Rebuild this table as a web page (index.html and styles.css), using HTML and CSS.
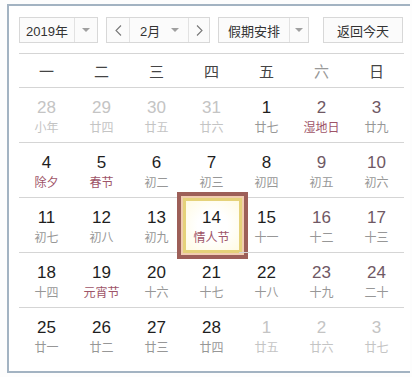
FILE: index.html
```html
<!DOCTYPE html>
<html lang="zh-CN">
<head>
<meta charset="utf-8">
<link rel="stylesheet" href="styles.css">
</head>
<body>
<div class="frame">
  <div class="toolbar">
    <div class="ctl sel year">
      <span class="label">2019年</span>
      <span class="drop"><i class="tri"></i></span>
    </div>
    <div class="ctl month">
      <span class="nav"><svg width="7" height="11" viewBox="0 0 7 11"><polyline points="6,0.5 1,5.5 6,10.5" fill="none" stroke="#777" stroke-width="1.1"/></svg></span>
      <span class="mlabel"><span>2月</span><i class="tri"></i></span>
      <span class="nav navr"><svg width="7" height="11" viewBox="0 0 7 11"><polyline points="1,0.5 6,5.5 1,10.5" fill="none" stroke="#777" stroke-width="1.1"/></svg></span>
    </div>
    <div class="ctl sel holiday">
      <span class="label">假期安排</span>
      <span class="drop"><i class="tri"></i></span>
    </div>
    <div class="ctl today">返回今天</div>
  </div>
  <div class="cal">
    <div class="wk">一</div><div class="wk">二</div><div class="wk">三</div><div class="wk">四</div><div class="wk">五</div><div class="wk light">六</div><div class="wk">日</div>

    <div class="d other"><b>28</b><span>小年</span></div>
    <div class="d other"><b>29</b><span>廿四</span></div>
    <div class="d other"><b>30</b><span>廿五</span></div>
    <div class="d other"><b>31</b><span>廿六</span></div>
    <div class="d"><b>1</b><span>廿七</span></div>
    <div class="d we"><b>2</b><span class="fest">湿地日</span></div>
    <div class="d we"><b>3</b><span>廿九</span></div>

    <div class="d"><b>4</b><span class="fest">除夕</span></div>
    <div class="d"><b>5</b><span class="fest">春节</span></div>
    <div class="d"><b>6</b><span>初二</span></div>
    <div class="d"><b>7</b><span>初三</span></div>
    <div class="d"><b>8</b><span>初四</span></div>
    <div class="d we"><b>9</b><span>初五</span></div>
    <div class="d we"><b>10</b><span>初六</span></div>

    <div class="d"><b>11</b><span>初七</span></div>
    <div class="d"><b>12</b><span>初八</span></div>
    <div class="d"><b>13</b><span>初九</span></div>
    <div class="d sel-day"><i class="mark"><i class="inner"></i></i><b>14</b><span class="fest">情人节</span></div>
    <div class="d"><b>15</b><span>十一</span></div>
    <div class="d we"><b>16</b><span>十二</span></div>
    <div class="d we"><b>17</b><span>十三</span></div>

    <div class="d"><b>18</b><span>十四</span></div>
    <div class="d"><b>19</b><span class="fest">元宵节</span></div>
    <div class="d"><b>20</b><span>十六</span></div>
    <div class="d"><b>21</b><span>十七</span></div>
    <div class="d"><b>22</b><span>十八</span></div>
    <div class="d we"><b>23</b><span>十九</span></div>
    <div class="d we"><b>24</b><span>二十</span></div>

    <div class="d last"><b>25</b><span>廿一</span></div>
    <div class="d last"><b>26</b><span>廿二</span></div>
    <div class="d last"><b>27</b><span>廿三</span></div>
    <div class="d last"><b>28</b><span>廿四</span></div>
    <div class="d last other"><b>1</b><span>廿五</span></div>
    <div class="d last other"><b>2</b><span>廿六</span></div>
    <div class="d last other"><b>3</b><span>廿七</span></div>
  </div>
</div>
</body>
</html>
```
FILE: styles.css
```css
html, body {
  margin: 0;
  padding: 0;
  background: #fdfdfd;
  overflow: hidden;
}
body {
  font-family: "Liberation Sans", "Noto Sans CJK SC", sans-serif;
  color: #222;
}
.frame {
  margin: 4px 0 0 7px;
  border: 2px solid #a3b3c2;
  border-right: 0;
  padding: 11px 0 9px 10px;
  width: 403px;
  box-sizing: border-box;
  background: #fff;
}
.toolbar {
  display: flex;
  align-items: stretch;
  height: 26px;
  font-size: 13px;
  color: #333;
  font-family: "Liberation Sans", "Noto Sans CJK SC", sans-serif;
}
.ctl {
  display: flex;
  align-items: stretch;
  border: 1px solid #d8d8d8;
  background: #fbfbfb;
  box-sizing: border-box;
}
.sel .label {
  display: flex;
  align-items: center;
  justify-content: center;
}
.year { width: 79px; }
.year .label { width: 54px; border-right: 1px solid #e2e2e2; }
.sel .drop {
  flex: 1;
  display: flex;
  align-items: center;
  justify-content: center;
}
.tri {
  display: block;
  width: 0;
  height: 0;
  border-left: 4px solid transparent;
  border-right: 4px solid transparent;
  border-top: 4px solid #a0a0a0;
}
.month { width: 104px; margin-left: 8px; }
.nav {
  width: 22px;
  display: flex;
  align-items: center;
  justify-content: center;
  border-right: 1px solid #e2e2e2;
}
.navr { border-right: 0; border-left: 1px solid #e2e2e2; width: 20px; }
.mlabel {
  flex: 1;
  display: flex;
  align-items: center;
  padding: 0 9px 0 10px;
  justify-content: space-between;
}
.holiday { width: 91px; margin-left: 8px; }
.holiday .label { width: 70px; border-right: 1px solid #e2e2e2; }
.today {
  width: 80px;
  margin-left: 14px;
  align-items: center;
  justify-content: center;
}
.cal {
  display: grid;
  grid-template-columns: repeat(7, 55px);
  width: 385px;
  margin-top: 10px;
  border-top: 1px solid #d5d5d5;
}
.wk {
  height: 33px;
  display: flex;
  align-items: center;
  justify-content: center;
  font-family: "Noto Sans CJK SC", sans-serif;
  font-size: 15px;
  color: #444;
  border-bottom: 1px solid #d5d5d5;
}
.wk.light { color: #999; }
.d {
  position: relative;
  border-bottom: 1px solid #d5d5d5;
  display: flex;
  flex-direction: column;
  align-items: center;
  padding-top: 10px;
  box-sizing: content-box;
  height: 44px;
}
.d.last { border-bottom: 0; }
.d b {
  position: relative;
  font-weight: normal;
  font-size: 17px;
  line-height: 20px;
  color: #1e1e1e;
}
.d span {
  position: relative;
  font-family: "Noto Sans CJK SC", sans-serif;
  font-size: 12px;
  line-height: 16px;
  margin-top: 1px;
  color: #979797;
}
.d.we b { color: #6f5864; }
.d span.fest { color: #9e5468; }
.d.other b, .d.other span { color: #c4c4c4; }
.mark {
  position: absolute;
  left: -7px;
  right: -9px;
  top: -6px;
  bottom: -7px;
  border: 4px solid #9d5f58;
  padding: 2px;
  background: #f1cdb0;
  display: block;
}
.mark .inner {
  display: block;
  width: 100%;
  height: 100%;
  box-sizing: border-box;
  border: 3px solid #e5d27a;
  background: radial-gradient(ellipse at center, #ffffff 40%, #fffbe3 100%);
}
```
